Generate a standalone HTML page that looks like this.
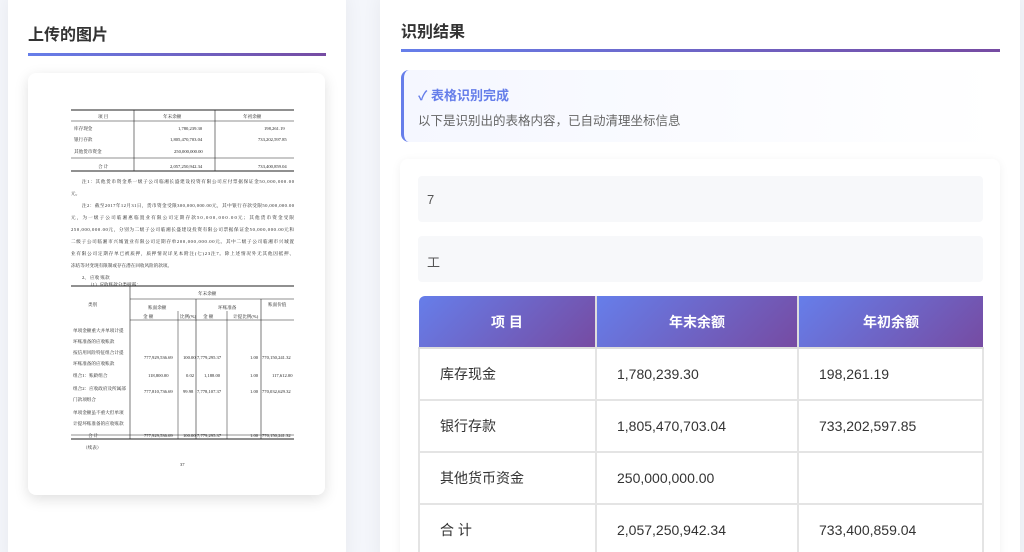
<!DOCTYPE html>
<html><head><meta charset="utf-8"><style>
*{margin:0;padding:0;box-sizing:border-box}
html,body{width:1024px;height:552px;overflow:hidden}
body{background:#f4f6fb;font-family:"Liberation Sans","Noto Sans CJK SC",sans-serif;position:relative}
.card{position:absolute;background:#fff;border-radius:12px;box-shadow:0 4px 20px rgba(0,0,0,.06)}
.lc{left:8px;top:-12px;width:338px;height:575px}
.rc{left:380px;top:-12px;width:640px;height:575px}
.t{position:absolute;font-size:16px;font-weight:bold;color:#333}
.line{position:absolute;height:3px;background:linear-gradient(90deg,#667eea,#764ba2)}
.img{position:absolute;left:28px;top:73px;width:297px;height:422px;background:#fff;border-radius:8px;box-shadow:0 4px 14px rgba(0,0,0,.13);overflow:hidden}
.st{position:absolute;left:401px;top:70px;width:599px;height:72px;border-left:3px solid #667eea;border-radius:8px;background:linear-gradient(90deg,#f5f7ff,#fff)}
.inner{position:absolute;left:400px;top:159px;width:600px;height:420px;background:#fff;border-radius:8px;box-shadow:0 2px 10px rgba(0,0,0,.06)}
.gb{position:absolute;left:418px;width:565px;height:46px;background:#f7f8fa;border-radius:4px;font-size:13px;color:#555;padding:16px 0 0 9px}
table{position:absolute;left:418px;top:296px;width:566px;table-layout:fixed;border-collapse:collapse;font-size:14px;color:#333}
th{height:52px;color:#fff;background:linear-gradient(135deg,#667eea,#764ba2);font-size:14px;border:2px solid #ddd;border-top:none}
td{height:52px;border:2px solid #e4e4e4;padding-left:20px}
</style></head><body>
<div class="card lc"></div><div class="card rc"></div>
<div class="t" style="left:28px;top:21px">上传的图片</div>
<div class="line" style="left:28px;top:53px;width:298px"></div>
<div class="t" style="left:401px;top:18px">识别结果</div>
<div class="line" style="left:401px;top:49px;width:599px"></div>
<div class="img"><svg width="297" height="422" viewBox="0 0 297 422" font-family="Liberation Serif,Noto Serif CJK SC,serif" font-size="4.6" fill="#222">
<g stroke="#222" stroke-width="0.9" fill="none">
<line x1="43" y1="37" x2="266" y2="37"/><line x1="43" y1="48" x2="266" y2="48" stroke-width=".6"/>
<line x1="43" y1="85" x2="266" y2="85" stroke-width=".6"/><line x1="43" y1="98" x2="266" y2="98"/>
<line x1="106" y1="37" x2="106" y2="98" stroke-width=".6"/><line x1="187" y1="37" x2="187" y2="98" stroke-width=".6"/>
<line x1="43" y1="213" x2="266" y2="213"/><line x1="43" y1="362" x2="266" y2="362" stroke-width=".6"/><line x1="43" y1="366" x2="266" y2="366"/>
<line x1="102" y1="213" x2="102" y2="366" stroke-width=".6"/><line x1="102" y1="226" x2="266" y2="226" stroke-width=".6"/>
<line x1="102" y1="247" x2="266" y2="247" stroke-width=".6"/><line x1="168" y1="226" x2="168" y2="366" stroke-width=".6"/>
<line x1="233" y1="226" x2="233" y2="366" stroke-width=".6"/><line x1="150" y1="238" x2="150" y2="366" stroke-width=".5"/>
<line x1="199" y1="238" x2="199" y2="366" stroke-width=".5"/>
</g>
<text x="70" y="45">项 目</text><text x="135" y="45">年末余额</text><text x="215" y="45">年初余额</text>
<text x="46" y="57">库存现金</text><text x="150" y="57">1,780,239.30</text><text x="236" y="57">198,261.19</text>
<text x="46" y="68">银行存款</text><text x="142" y="68">1,805,470,703.04</text><text x="230" y="68">733,202,597.85</text>
<text x="46" y="80">其他货币资金</text><text x="146" y="80">250,000,000.00</text>
<text x="70" y="95">合 计</text><text x="142" y="95">2,057,250,942.34</text><text x="230" y="95">733,400,859.04</text>
<text x="54" y="110" textLength="212">注1：其他货币资金系一级子公司临湘长盛建设投资有限公司应付票据保证金50,000,000.00</text>
<text x="43" y="122">元。</text>
<text x="54" y="134" textLength="212">注2：截至2017年12月31日，货币资金受限300,000,000.00元，其中银行存款受限50,000,000.00</text>
<text x="43" y="146" textLength="223">元，为一级子公司临湘惠临置业有限公司定期存款50,000,000.00元；其他货币资金受限</text>
<text x="43" y="158" textLength="223">250,000,000.00元，分别为二级子公司临湘长盛建设投资有限公司票据保证金50,000,000.00元和</text>
<text x="43" y="170" textLength="223">二级子公司临湘市兴城置业有限公司定期存单200,000,000.00元。其中二级子公司临湘市兴城置</text>
<text x="43" y="182" textLength="223">业有限公司定期存单已被质押，质押情况详见本附注(七)23注7。除上述情况外无其他因抵押、</text>
<text x="43" y="194">冻结等对变现有限制或存在潜在回收风险的款项。</text>
<text x="54" y="206">2、 应收 账款</text><text x="60" y="213">（1）应收账款分类披露：</text>
<text x="170" y="222">年末余额</text><text x="60" y="233">类别</text><text x="240" y="233">账面价值</text>
<text x="120" y="236">账面余额</text><text x="190" y="236">坏账准备</text>
<text x="115" y="245">金 额</text><text x="152" y="245">比例(%)</text><text x="175" y="245">金 额</text><text x="205" y="245">计提比例(%)</text>
<text x="45" y="259">单项金额重大并单项计提</text><text x="45" y="270">坏账准备的应收账款</text>
<text x="45" y="281">按信用风险特征组合计提</text><text x="45" y="292">坏账准备的应收账款</text>
<text x="116" y="286">777,929,536.69</text><text x="155" y="286">100.00</text><text x="169" y="286">7,779,295.37</text><text x="222" y="286">1.00</text><text x="234" y="286">770,150,241.32</text>
<text x="45" y="304">组合1：账龄组合</text><text x="120" y="304">118,800.00</text><text x="158" y="304">0.02</text><text x="176" y="304">1,188.00</text><text x="222" y="304">1.00</text><text x="244" y="304">117,612.00</text>
<text x="45" y="317">组合2：应收政府及所属部</text><text x="116" y="320">777,810,736.69</text><text x="155" y="320">99.98</text><text x="169" y="320">7,778,107.37</text><text x="222" y="320">1.00</text><text x="234" y="320">770,032,629.32</text>
<text x="45" y="328">门款项组合</text><text x="45" y="341">单项金额虽不重大但单项</text><text x="45" y="352">计提坏账准备的应收账款</text>
<text x="60" y="364">合 计</text><text x="116" y="364">777,929,536.69</text><text x="155" y="364">100.00</text><text x="169" y="364">7,779,295.37</text><text x="222" y="364">1.00</text><text x="234" y="364">770,150,241.32</text>
<text x="55" y="376">（续表）</text><text x="152" y="393">37</text>
</svg></div>
<div class="st"><div style="position:absolute;left:14px;top:15px;font-size:13px;font-weight:bold;color:#667eea">✓ 表格识别完成</div>
<div style="position:absolute;left:14px;top:40px;font-size:12.5px;color:#666">以下是识别出的表格内容，已自动清理坐标信息</div></div>
<div class="inner"></div>
<div class="gb" style="top:176px">7</div>
<div class="gb" style="top:236px">工</div>
<table>
<tr><th style="width:177px;border-left:none;border-radius:6px 0 0 0">项 目</th><th style="width:202px">年末余额</th><th style="border-right:none">年初余额</th></tr>
<tr><td>库存现金</td><td>1,780,239.30</td><td>198,261.19</td></tr>
<tr><td>银行存款</td><td>1,805,470,703.04</td><td>733,202,597.85</td></tr>
<tr><td>其他货币资金</td><td>250,000,000.00</td><td></td></tr>
<tr><td>合 计</td><td>2,057,250,942.34</td><td>733,400,859.04</td></tr>
</table>
</body></html>
